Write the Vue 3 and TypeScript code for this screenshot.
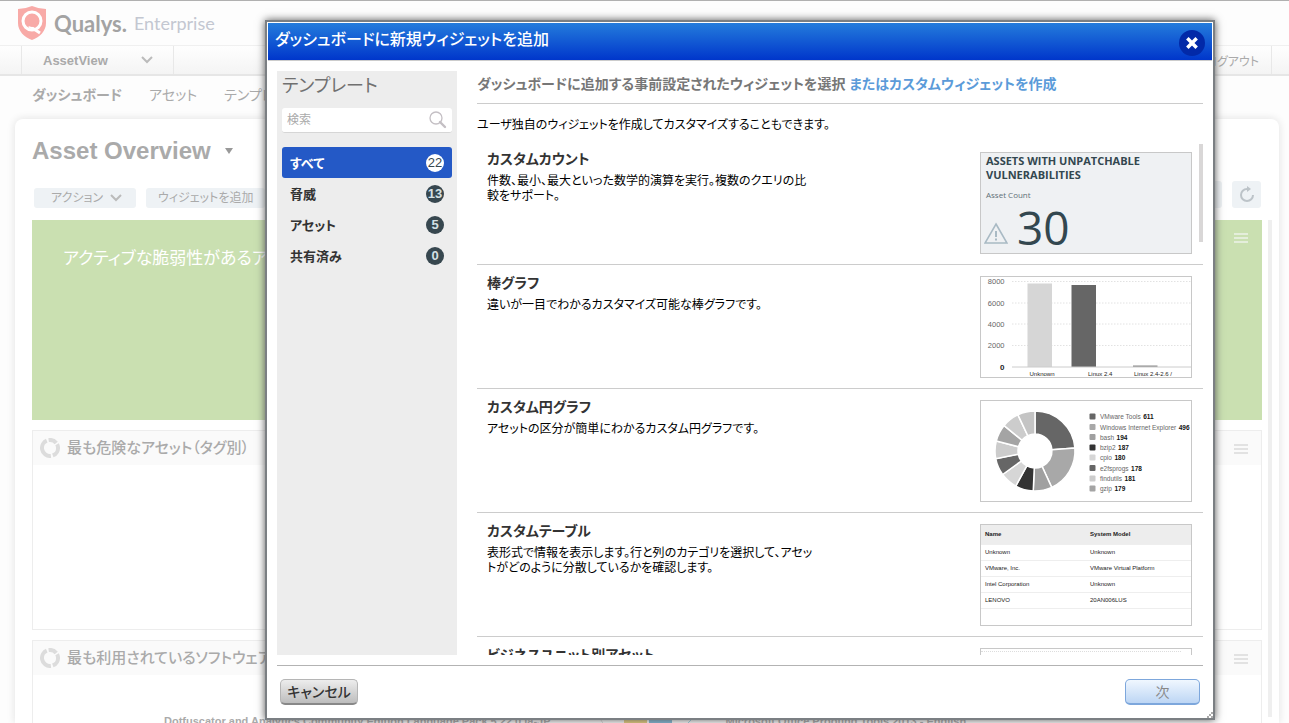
<script setup lang="ts">
import { ref } from 'vue'

interface Category {
  name: string
  count: number
}
interface Template {
  kind: 'count' | 'bars' | 'donut' | 'table' | 'blank'
  title: string
  text: string
}
interface Slice {
  value: number
  color: string
  label?: string
}

const categories: Category[] = [
  { name: 'すべて', count: 22 },
  { name: '脅威', count: 13 },
  { name: 'アセット', count: 5 },
  { name: '共有済み', count: 0 },
]
const selected = ref('すべて')
const query = ref('')

const templates: Template[] = [
  {
    kind: 'count',
    title: 'カスタムカウント',
    text: '件数、最小、最大といった数学的演算を実行。複数のクエリの比\n較をサポート。',
  },
  { kind: 'bars', title: '棒グラフ', text: '違いが一目でわかるカスタマイズ可能な棒グラフです。' },
  { kind: 'donut', title: 'カスタム円グラフ', text: 'アセットの区分が簡単にわかるカスタム円グラフです。' },
  {
    kind: 'table',
    title: 'カスタムテーブル',
    text: '表形式で情報を表示します。行と列のカテゴリを選択して、アセッ\nトがどのように分散しているかを確認します。',
  },
  { kind: 'blank', title: 'ビジネスユニット別アセット', text: '' },
]

const axis = [
  { label: '8000', y: 9 },
  { label: '6000', y: 52 },
  { label: '4000', y: 94 },
  { label: '2000', y: 137 },
]

const slices: Slice[] = [
  { value: 611, color: '#666666', label: 'VMware Tools' },
  { value: 496, color: '#a8a8a8', label: 'Windows Internet Explorer' },
  { value: 194, color: '#a0a0a0', label: 'bash' },
  { value: 187, color: '#333333', label: 'bzip2' },
  { value: 180, color: '#d6d6d6', label: 'cpio' },
  { value: 178, color: '#666666', label: 'e2fsprogs' },
  { value: 181, color: '#cccccc', label: 'findutils' },
  { value: 179, color: '#a4a4a4', label: 'gzip' },
  { value: 180, color: '#cccccc' },
  { value: 180, color: '#c4c4c4' },
]
const legend = slices.filter((s) => s.label)

function arcs(): { d: string; color: string }[] {
  const total = slices.reduce((sum, s) => sum + s.value, 0)
  const at = (r: number, a: number) =>
    `${(108 + r * Math.sin(a)).toFixed(2)} ${(100 - r * Math.cos(a)).toFixed(2)}`
  let angle = 0
  return slices.map((s) => {
    const end = angle + (s.value / total) * Math.PI * 2
    const d = `M${at(80, angle)}A80 80 0 0 1 ${at(80, end)}L${at(34, end)}A34 34 0 0 0 ${at(34, angle)}Z`
    angle = end
    return { d, color: s.color }
  })
}
const donut = arcs()

const machines = [
  ['Unknown', 'Unknown'],
  ['VMware, Inc.', 'VMware Virtual Platform'],
  ['Intel Corporation', 'Unknown'],
  ['LENOVO', '20AN006LUS'],
]

const cards = [
  { title: '最も危険なアセット（タグ別）', software: false },
  { title: '最も利用されているソフトウェア', software: true },
]
</script>

<template>
  <div class="app">
    <header class="brand">
      <svg class="shield" viewBox="0 0 28 34" aria-hidden="true">
        <path d="M0 3Q7 3 14 0Q21 3 28 3V17C28 25 22 31 14 34C6 31 0 25 0 17Z" fill="#f8aaa7" />
        <circle cx="14" cy="15" r="9" fill="none" stroke="#fff" stroke-width="3" />
        <path d="M11 20Q16 23 22 27" fill="none" stroke="#fff" stroke-width="3" />
        <circle cx="14" cy="15" r="6" fill="#f8aaa7" />
      </svg>
      <span class="name">Qualys.</span>
      <span class="edition">Enterprise</span>
    </header>

    <nav class="modules">
      <button class="module" type="button">
        AssetView
        <svg viewBox="0 0 12 8" aria-hidden="true"><path d="M1 1L6 6L11 1" /></svg>
      </button>
      <a class="logout" href="#">ログアウト</a>
    </nav>

    <nav class="tabs">
      <a class="current" href="#">ダッシュボード</a>
      <a href="#">アセット</a>
      <a href="#">テンプレート</a>
    </nav>

    <main class="panel">
      <h1>Asset Overview <svg viewBox="0 0 8 6" aria-hidden="true"><path d="M0 0H8L4 6Z" /></svg></h1>
      <div class="tools">
        <button class="action" type="button">
          アクション
          <svg viewBox="0 0 12 8" aria-hidden="true"><path d="M1 1L6 6L11 1" /></svg>
        </button>
        <button type="button">ウィジェットを追加</button>
        <button class="range" type="button" aria-label="期間"></button>
        <button class="refresh" type="button" aria-label="更新">
          <svg viewBox="0 0 16 18" aria-hidden="true">
            <path d="M9 3H8A6 6 0 1 0 14 9" fill="none" stroke="#bcc3c8" stroke-width="2" />
            <path d="M8 0L12 3L8 6Z" fill="#bcc3c8" />
          </svg>
        </button>
      </div>
      <div class="board">
        <section class="hero">
          <h2>アクティブな脆弱性があるアセット</h2>
          <i class="menu"></i>
        </section>
        <section v-for="card in cards" :key="card.title" class="card">
          <header>
            <svg class="ring" viewBox="0 0 20 20" aria-hidden="true">
              <circle cx="10" cy="10" r="8" pathLength="100" transform="rotate(-100 10 10)" />
            </svg>
            <h2>{{ card.title }}</h2>
            <i class="menu"></i>
          </header>
          <div v-if="card.software" class="software">
            <span>Dotfuscator and Analytics Community Edition Language Pack 5.22.0 ja-JP</span>
            <svg viewBox="0 0 110 10" aria-hidden="true">
              <path d="M10 0L16 10" stroke="#ddd" fill="none" />
              <path d="M36 2H59V10H36Z" fill="#e8cf7c" />
              <path d="M61 2H84V10H61Z" fill="#7fb9d8" />
              <path d="M108 0L98 10" stroke="#9fd4e6" fill="none" />
            </svg>
            <span>Microsoft Office Proofing Tools 2013 - English</span>
          </div>
        </section>
      </div>
    </main>

    <div class="dialog" role="dialog" aria-labelledby="dialog-title">
      <header class="bar">
        <h2 id="dialog-title">ダッシュボードに新規ウィジェットを追加</h2>
        <button class="close" type="button" aria-label="閉じる">
          <svg viewBox="0 0 12 12" aria-hidden="true"><path d="M2 2L10 10M10 2L2 10" /></svg>
        </button>
      </header>

      <div class="content">
        <aside>
          <h3>テンプレート</h3>
          <label class="search">
            <input v-model="query" type="text" placeholder="検索" aria-label="検索" />
            <svg viewBox="0 0 18 18" aria-hidden="true">
              <circle cx="7" cy="7" r="6" fill="none" stroke="#c4bfc4" stroke-width="1.3" />
              <path d="M11 11L16 16" stroke="#c4bfc4" stroke-width="2.4" stroke-linecap="round" />
            </svg>
          </label>
          <ul>
            <li v-for="c in categories" :key="c.name">
              <button type="button" :class="{ on: selected === c.name }" @click="selected = c.name">
                <span>{{ c.name }}</span><b>{{ c.count }}</b>
              </button>
            </li>
          </ul>
        </aside>

        <section class="gallery">
          <h3>
            ダッシュボードに追加する事前設定されたウィジェットを選択
            <a href="#">またはカスタムウィジェットを作成</a>
          </h3>
          <p class="intro">ユーザ独自のウィジェットを作成してカスタマイズすることもできます。</p>
          <div class="list">
            <article v-for="t in templates" :key="t.title">
              <div>
                <h4>{{ t.title }}</h4>
                <p>{{ t.text }}</p>
              </div>
              <div class="thumb" :class="t.kind">
                <template v-if="t.kind === 'count'">
                  <strong>ASSETS WITH UNPATCHABLE<br />VULNERABILITIES</strong>
                  <small>Asset Count</small>
                  <div class="total">
                    <svg viewBox="0 0 24 22" aria-hidden="true">
                      <path d="M12 2L23 21H1Z" stroke-width="1.6" />
                      <path d="M12 9V15M12 16.5V18.5" stroke-width="2" />
                    </svg>
                    <span>30</span>
                  </div>
                </template>

                <svg v-else-if="t.kind === 'bars'" viewBox="0 0 420 200">
                  <g v-for="a in axis" :key="a.label">
                    <path :d="`M62 ${a.y}H420`" stroke="#e2e2e2" stroke-width="2" stroke-dasharray="3 3" />
                    <text x="47" :y="a.y + 5" text-anchor="end" font-size="15" fill="#666">{{ a.label }}</text>
                  </g>
                  <text x="47" y="186" text-anchor="end" font-size="16" font-weight="bold" fill="#222">0</text>
                  <path d="M93 13H142V180H93Z" fill="#d6d6d6" />
                  <path d="M181 16H230V180H181Z" fill="#666" />
                  <path d="M304 177H353V180H304Z" fill="#888" />
                  <path d="M62 180H420" stroke="#ccc" stroke-width="2" />
                  <text x="97" y="197" font-size="12" fill="#222">Unknown</text>
                  <text x="214" y="197" font-size="12" fill="#222">Linux 2.4</text>
                  <text x="306" y="197" font-size="12" fill="#222">Linux 2.4-2.6 /</text>
                </svg>

                <svg v-else-if="t.kind === 'donut'" viewBox="0 0 420 200">
                  <path v-for="(s, i) in donut" :key="i" :d="s.d" :fill="s.color" stroke="#fff" stroke-width="3" />
                  <g v-for="(s, i) in legend" :key="s.label" font-size="13">
                    <rect x="217" :y="25 + Math.round(i * 20.6)" width="12" height="12" rx="2" :fill="s.color" />
                    <text x="238" :y="36 + Math.round(i * 20.6)" fill="#666">
                      {{ s.label }}<tspan dx="5" font-weight="bold" fill="#111">{{ s.value }}</tspan>
                    </text>
                  </g>
                </svg>

                <table v-else-if="t.kind === 'table'">
                  <thead>
                    <tr><th>Name</th><th>System Model</th></tr>
                  </thead>
                  <tbody>
                    <tr v-for="m in machines" :key="m[0]">
                      <td>{{ m[0] }}</td><td>{{ m[1] }}</td>
                    </tr>
                  </tbody>
                </table>
                <div v-else class="dots"></div>
              </div>
            </article>
          </div>
        </section>
      </div>

      <footer>
        <button class="cancel" type="button">キャンセル</button>
        <button class="next" type="button">次</button>
      </footer>
      <svg class="grip" viewBox="0 0 6 6" aria-hidden="true">
        <path d="M4 0H6V2H4ZM2 2H4V4H2ZM4 4H6V6H4ZM0 4H2V6H0Z" />
      </svg>
    </div>
  </div>
</template>

<style>
html,
body,
#app {
  height: 100%;
}
body {
  margin: 0;
}
</style>

<style scoped>
.app {
  position: relative;
  display: flex;
  flex-direction: column;
  height: 100%;
  overflow: hidden;
  box-sizing: border-box;
  border-top: 1px solid #b0b0b0;
  background: #fdfdfd;
  color: #aaa;
  font-family: 'Liberation Sans', 'Noto Sans CJK JP', sans-serif;
  font-size: 13px;
  font-feature-settings: 'palt';
}
* {
  box-sizing: border-box;
}
h1,
h2,
h3,
h4,
p,
ul {
  margin: 0;
  padding: 0;
  list-style: none;
}
a {
  color: inherit;
  text-decoration: none;
}
button,
input {
  margin: 0;
  padding: 0;
  border: 0;
  background: none;
  color: inherit;
  font: inherit;
  font-feature-settings: inherit;
}
svg {
  display: block;
  flex: none;
}

.brand {
  display: flex;
  align-items: center;
  flex: none;
  height: 44px;
  padding-left: 18px;
  font-family: Lato, 'Liberation Sans', sans-serif;
}
.shield {
  width: 28px;
  height: 34px;
}
.name {
  margin-left: 8px;
  color: #a3a3a3;
  font-size: 22px;
  font-weight: bold;
}
.edition {
  margin-left: 7px;
  color: #c3c7d1;
  font-size: 18px;
}

.modules {
  display: flex;
  align-items: center;
  justify-content: space-between;
  flex: none;
  height: 31px;
  padding: 0 17px 0 21px;
  border-top: 1px solid #f0f0f0;
  border-bottom: 2px solid #e6e6e6;
  background: linear-gradient(#fefefe, #f4f4f4);
}
.module {
  display: flex;
  align-items: center;
  justify-content: space-between;
  width: 153px;
  height: 28px;
  padding: 0 20px 0 21px;
  border: solid #e8e8e8;
  border-width: 0 1px;
  font-weight: bold;
}
.module svg,
.action svg {
  width: 12px;
  height: 8px;
  fill: none;
  stroke: #bbb;
  stroke-width: 2;
}
.logout {
  display: flex;
  align-items: center;
  height: 28px;
  padding-right: 12px;
  border-right: 1px solid #e8e8e8;
  font-size: 12px;
}

.tabs {
  display: flex;
  flex: none;
  gap: 27px;
  height: 43px;
  padding-left: 32px;
  font-size: 14px;
  line-height: 38px;
}
.tabs .current {
  font-weight: bold;
}

.panel {
  flex: 1;
  display: flex;
  flex-direction: column;
  min-height: 0;
  margin: 0 10px 0 15px;
  padding: 16px 7px 0 17px;
  border-radius: 8px 8px 0 0;
  background: #fff;
  box-shadow: 0 0 8px #e0e0e0;
}
h1 {
  display: flex;
  align-items: center;
  gap: 14px;
  font-size: 24px;
  line-height: 32px;
}
h1 svg {
  width: 8px;
  height: 6px;
  fill: #999;
}
.tools {
  display: flex;
  align-items: flex-end;
  gap: 10px;
  height: 27px;
  margin: 14px 11px 12px 2px;
}
.tools button {
  height: 20px;
  padding: 0 12px;
  border-radius: 3px;
  background: #eef2f5;
  font-size: 12px;
  line-height: 20px;
}
.tools .action {
  display: flex;
  align-items: center;
  justify-content: space-between;
  width: 102px;
  padding: 0 14px 0 17px;
}
.tools .range {
  width: 60px;
  height: 27px;
  margin-left: auto;
}
.tools .refresh {
  width: 29px;
  height: 27px;
  padding: 0 7px;
}
.refresh svg {
  width: 16px;
  height: 18px;
}
.board {
  flex: 1;
  display: flex;
  flex-direction: column;
  gap: 10px;
  min-height: 0;
  margin-bottom: 6px;
  padding-right: 6px;
  border-right: 4px solid #efefef;
}
.hero {
  display: flex;
  justify-content: space-between;
  flex: none;
  height: 200px;
  padding: 12px 14px 0 31px;
  background: #cae0b1;
  color: #fff;
}
.hero h2 {
  padding-top: 14px;
  font-size: 17px;
  font-weight: normal;
  line-height: 26px;
}
.menu {
  width: 14px;
  height: 10px;
  margin-top: 1px;
  border: solid #e2e2e2;
  border-width: 2px 0;
  background: linear-gradient(#e2e2e2, #e2e2e2) center / 14px 2px no-repeat;
}
.hero .menu {
  border-color: #e4eedb;
  background-image: linear-gradient(#e4eedb, #e4eedb);
}
.card {
  flex: none;
  height: 200px;
  border: 1px solid #ededed;
}
.card header {
  display: flex;
  align-items: center;
  height: 34px;
  padding: 0 13px 0 7px;
  background: #fafafa;
}
.card h2 {
  flex: 1;
  margin-left: 7px;
  padding-bottom: 3px;
  font-size: 15px;
  font-weight: 500;
}
.ring {
  width: 20px;
  height: 20px;
  fill: none;
  stroke: #dcdcdc;
  stroke-width: 4;
}
.ring circle {
  stroke-dasharray: 17 3 27 4 45 4;
}
.software {
  display: flex;
  padding: 38px 0 0 131px;
  font-size: 11px;
  font-weight: bold;
  line-height: 16px;
}
.software svg {
  width: 110px;
  height: 10px;
  margin: 2px 28px 0 37px;
}

.dialog {
  position: absolute;
  inset: 19px 74px 3px 265px;
  display: flex;
  flex-direction: column;
  padding: 1px;
  border: 2px solid #7b7f83;
  background: #fff;
  box-shadow: 0 0 8px #555;
  color: #333;
}
.bar {
  display: flex;
  justify-content: space-between;
  flex: none;
  height: 38px;
  padding: 0 7px;
  border-bottom: 1px solid #ccc;
  background: linear-gradient(#247cdc, #0036cb);
  color: #fff;
}
.bar h2 {
  font-size: 16px;
  font-weight: 500;
  line-height: 34px;
}
.close {
  display: grid;
  place-items: center;
  width: 26px;
  height: 26px;
  margin-top: 7px;
  border-radius: 50%;
  background: #0229a8;
}
.close svg {
  width: 14px;
  height: 14px;
  stroke: #fff;
  stroke-width: 3;
}
.content {
  flex: 1;
  display: flex;
  gap: 20px;
  min-height: 0;
  padding: 10px 9px;
}
aside {
  flex: none;
  width: 180px;
  padding: 0 5px;
  background: #ededed;
}
aside h3 {
  color: #707070;
  font-size: 18px;
  font-weight: normal;
  line-height: 30px;
}
.search {
  display: flex;
  align-items: center;
  height: 25px;
  margin: 7px 0 14px;
  padding: 0 5px;
  border-radius: 3px;
  border-bottom: 1px solid #d6d6d6;
  background: #fff;
}
.search input {
  flex: 1;
  min-width: 0;
  outline: 0;
  font-size: 12px;
}
.search input::placeholder {
  color: #aaa;
}
.search svg {
  width: 18px;
  height: 18px;
}
aside li button {
  display: flex;
  align-items: center;
  justify-content: space-between;
  width: 100%;
  height: 31px;
  padding: 0 8px;
  border-radius: 3px;
  font-size: 13px;
  font-weight: bold;
}
aside li span {
  padding-bottom: 1px;
}
aside b {
  width: 18px;
  height: 18px;
  border-radius: 50%;
  background: #37474f;
  color: #d5e0e4;
  font-size: 13px;
  line-height: 18px;
  text-align: center;
}
aside .on {
  background: #2459c6;
  color: #fff;
}
aside .on b {
  background: #fff;
  color: #37474f;
  font-weight: normal;
}

.gallery {
  flex: 1;
  display: flex;
  flex-direction: column;
  min-width: 0;
}
.gallery h3 {
  height: 33px;
  border-bottom: 1px solid #ccc;
  color: #777;
  font-size: 14px;
  line-height: 26px;
  white-space: nowrap;
}
.gallery h3 a {
  color: #5b9bd9;
}
.intro {
  flex: none;
  padding: 13px 0 8px;
  color: #000;
  font-size: 12px;
  line-height: 16px;
}
.list {
  position: relative;
  flex: 1;
  min-height: 0;
  overflow: hidden;
}
.list::after {
  content: '';
  position: absolute;
  top: 3px;
  right: 0;
  width: 4px;
  height: 98px;
  background: #d9d7d7;
}
article {
  display: flex;
  justify-content: space-between;
  padding: 11px 11px 10px 10px;
  border-bottom: 1px solid #ccc;
}
h4 {
  font-size: 14px;
  line-height: 14px;
}
article p {
  margin-top: 8px;
  color: #000;
  font-size: 12px;
  line-height: 15px;
  white-space: pre-line;
}
.thumb {
  flex: none;
  width: 212px;
  height: 102px;
  overflow: hidden;
  border: 1px solid #c8c8c8;
  background: #fff;
}
.thumb > svg {
  width: 210px;
  height: 100px;
}
.count {
  padding: 1px 5px;
  background: #eff1f3;
  color: #33474f;
  font-family: 'Open Sans', sans-serif;
}
.count strong {
  display: block;
  font-size: 11px;
  font-weight: bold;
  line-height: 14px;
}
.count small {
  display: block;
  margin-top: 6px;
  color: #5f7077;
  font-size: 8px;
  line-height: 14px;
}
.total {
  display: flex;
  align-items: center;
}
.total span {
  margin-left: 9px;
  font-size: 46px;
  line-height: 50px;
}
.total svg {
  width: 24px;
  height: 22px;
  margin: 12px 0 0 -2px;
  fill: none;
  stroke: #a9bac4;
}
table {
  width: 100%;
  border-collapse: collapse;
  color: #222;
  font-size: 6px;
  text-align: left;
}
th,
td {
  height: 16px;
  padding: 0 0 0 4px;
  border-bottom: 1px solid #eee;
}
th {
  width: 50%;
  height: 19px;
  background: #ededed;
}
.dots {
  margin: 2px 10px 0 0;
  border-top: 1px dotted #ddd;
}
footer {
  display: flex;
  align-items: flex-start;
  justify-content: space-between;
  flex: none;
  height: 52px;
  margin: 0 9px;
  padding: 13px 3px 0;
  border-top: 1px solid #b3b3b3;
}
footer button {
  height: 26px;
  border-radius: 5px;
  font-size: 14px;
  line-height: 22px;
}
.cancel {
  width: 78px;
  border: 1px solid #b5b5b5;
  border-bottom: 2px solid #888;
  background: linear-gradient(#ededed, #bdbdbd);
  font-weight: 500;
}
.next {
  width: 75px;
  border: 1px solid #7da7dc;
  border-bottom-width: 2px;
  background: linear-gradient(#f0f7ff, #bdd6f4);
  color: #888;
}
.grip {
  position: absolute;
  right: 0;
  bottom: 0;
  width: 6px;
  height: 6px;
  fill: #aaa;
}
</style>
